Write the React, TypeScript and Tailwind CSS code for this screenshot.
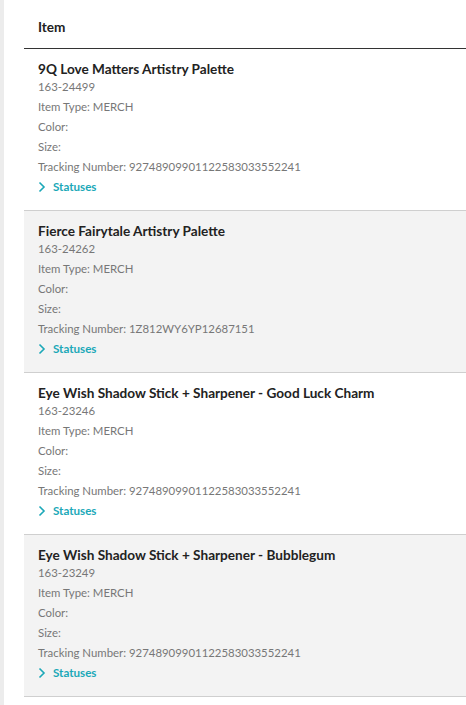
import React from 'react';

type Item = {
    name: string;
    sku: string;
    tracking: string;
};

const items: Item[] = [
    { name: '9Q Love Matters Artistry Palette', sku: '163-24499', tracking: '92748909901122583033552241' },
    { name: 'Fierce Fairytale Artistry Palette', sku: '163-24262', tracking: '1Z812WY6YP12687151' },
    { name: 'Eye Wish Shadow Stick + Sharpener - Good Luck Charm', sku: '163-23246', tracking: '92748909901122583033552241' },
    { name: 'Eye Wish Shadow Stick + Sharpener - Bubblegum', sku: '163-23249', tracking: '92748909901122583033552241' },
];

function Row({ item, shaded }: { item: Item; shaded: boolean }) {
    return (
        <div className={`pl-[14px] pt-[12px] pb-[13px] border-b border-[#cfcfcf] ${shaded ? 'bg-[#f3f3f3]' : 'bg-white'}`}>
            <div className="text-[13.6px] leading-[16px] font-bold text-[#222]">{item.name}</div>
            <div className="text-[11.4px] leading-[20px] text-[#777]">
                <div>{item.sku}</div>
                <div>Item Type: MERCH</div>
                <div>Color:</div>
                <div>Size:</div>
                <div>Tracking Number: {item.tracking}</div>
            </div>
            <button type="button" className="flex items-center gap-[7px] h-[20px] text-[11.6px] font-bold text-[#1ba8b8]">
                <svg width="8" height="12" viewBox="0 0 8 12" fill="none">
                    <path d="M1.5 1.5 L6 6 L1.5 10.5" stroke="#1ba8b8" strokeWidth="1.6" />
                </svg>
                Statuses
            </button>
        </div>
    );
}

export default function App() {
    return (
        <div className="w-[466px] h-[705px] flex bg-white overflow-hidden" style={{ fontFamily: 'Lato, "Open Sans", sans-serif' }}>
            <div className="w-[4px] bg-[#ececec] shrink-0" />
            <div className="flex-1 pl-[20px]">
                <div className="h-[49px] pl-[14px] flex items-center border-b border-[#333]">
                    <span className="text-[13.6px] font-bold text-[#222] mt-[7px]">Item</span>
                </div>
                {items.map((item, i) => (
                    <Row key={item.sku} item={item} shaded={i % 2 === 1} />
                ))}
            </div>
        </div>
    );
}
